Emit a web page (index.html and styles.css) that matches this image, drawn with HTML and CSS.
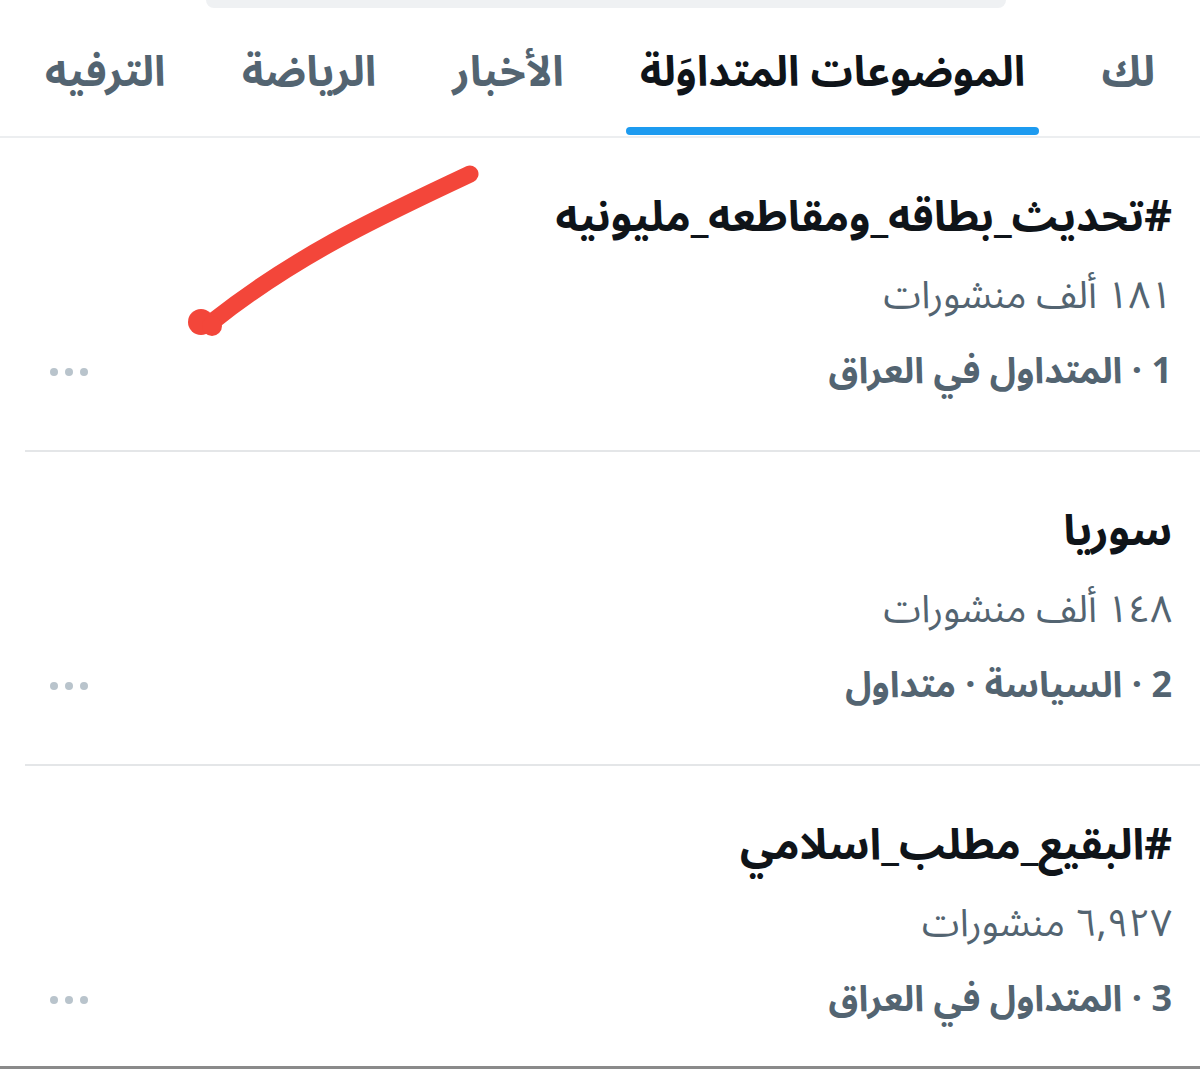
FILE: index.html
```html
<!DOCTYPE html>
<html lang="ar" dir="rtl">
<head>
<meta charset="utf-8">
<title>المتداول</title>
<link rel="stylesheet" href="styles.css">
</head>
<body>
<div class="page">
  <div class="search-wrap"><div class="search"></div></div>
  <nav class="tabs">
    <span class="tab">لك</span>
    <span class="tab active">الموضوعات المتداوَلة</span>
    <span class="tab">الأخبار</span>
    <span class="tab">الرياضة</span>
    <span class="tab">الترفيه</span>
  </nav>
  <main class="list">
    <section class="trend">
      <div class="info">
        <div class="title">#تحديث_بطاقه_ومقاطعه_مليونيه</div>
        <div class="count">١٨١ ألف منشورات</div>
        <div class="meta">1 · المتداول في العراق</div>
      </div>
      <div class="more"><i></i><i></i><i></i></div>
      <svg class="check" viewBox="0 0 500 360" width="500" height="360">
        <path d="M470 174 C 390 212, 300 252, 212 322" fill="none" stroke="#f3463a" stroke-width="17" stroke-linecap="round"/>
        <circle cx="201" cy="322" r="13" fill="#f3463a"/>
        <circle cx="212" cy="326" r="10" fill="#f3463a"/>
      </svg>
    </section>
    <section class="trend">
      <div class="info">
        <div class="title">سوريا</div>
        <div class="count">١٤٨ ألف منشورات</div>
        <div class="meta">2 · السياسة · متداول</div>
      </div>
      <div class="more"><i></i><i></i><i></i></div>
    </section>
    <section class="trend">
      <div class="info">
        <div class="title">#البقيع_مطلب_اسلامي</div>
        <div class="count">٦,٩٢٧ منشورات</div>
        <div class="meta">3 · المتداول في العراق</div>
      </div>
      <div class="more"><i></i><i></i><i></i></div>
    </section>
  </main>
  <div class="bottom-edge"></div>
</div>
</body>
</html>
```
FILE: styles.css
```css
html, body {
  margin: 0;
  padding: 0;
  background: #ffffff;
}
body {
  font-family: "Noto Sans Arabic", "DejaVu Sans", "Noto Sans", sans-serif;
  color: #0f1419;
}
.page {
  width: 1200px;
  height: 1069px;
  overflow: hidden;
  position: relative;
  display: flex;
  flex-direction: column;
}
.page > * {
  flex-shrink: 0;
}
.search-wrap {
  height: 8px;
  display: flex;
  justify-content: center;
}
.search {
  width: 800px;
  height: 8px;
  margin-left: 12px;
  background: #eff1f3;
  border-radius: 0 0 40px 40px;
}
.tabs {
  height: 130px;
  display: flex;
  justify-content: space-between;
  align-items: center;
  padding: 0 45px 0 45px;
  box-sizing: border-box;
  border-bottom: 2px solid #eceef0;
  position: relative;
}
.tab {
  font-size: 42px;
  font-weight: bold;
  color: #536471;
  position: relative;
  line-height: 1;
  margin-top: 2px;
}
.tab.active {
  color: #0f1419;
}
.tab.active::after {
  content: "";
  position: absolute;
  left: -14px;
  right: -14px;
  top: 75px;
  height: 8px;
  border-radius: 4px;
  background: #1d9bf0;
}
.trend {
  position: relative;
  display: flex;
  align-items: flex-end;
  margin-left: 25px;
  padding: 40px 28px 40px 25px;
  border-bottom: 2px solid #e4e6e8;
  height: 232px;
}
.info {
  flex: 1;
}
.title {
  height: 80px;
  line-height: 80px;
  font-size: 43px;
  font-weight: bold;
  color: #0f1419;
}
.count {
  height: 76px;
  line-height: 76px;
  font-size: 38px;
  color: #536471;
}
.meta {
  height: 76px;
  line-height: 76px;
  font-size: 36px;
  font-weight: bold;
  color: #536471;
}
.more {
  display: flex;
  gap: 7px;
  height: 76px;
  align-items: center;
  direction: ltr;
}
.more i {
  width: 8px;
  height: 8px;
  border-radius: 50%;
  background: #b9c4cc;
}
.check {
  position: absolute;
  left: -25px;
  top: -138px;
  pointer-events: none;
}
.bottom-edge {
  position: absolute;
  left: 0;
  right: 0;
  bottom: 0;
  height: 3px;
  background: #8a8a8a;
}
```
